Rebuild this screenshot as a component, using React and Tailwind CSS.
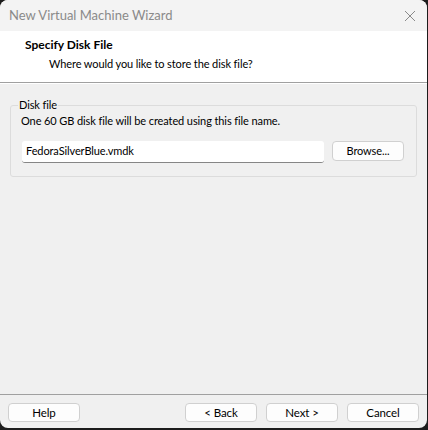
export default function App() {
  const font = { fontFamily: 'Lato, "Noto Sans", sans-serif' };
  return (
    <div className="w-[428px] h-[430px] bg-[#1c1c1c]" style={font}>
      <div className="w-[427px] h-[428px] rounded-[8px] bg-[#f0f0f0] overflow-hidden flex flex-col text-[11px] tracking-[-0.1px] text-black">
        <div className="h-[31px] shrink-0 flex items-center justify-between bg-[#f3f3f3] pl-[9px] pr-[10px]">
          <span className="text-[13px] tracking-normal text-[#8a8a8a]">New Virtual Machine Wizard</span>
          <svg width="12" height="12" viewBox="0 0 12 12" className="mr-[1px]">
            <path d="M1 1L11 11M11 1L1 11" stroke="#8a8a8a" strokeWidth="1" />
          </svg>
        </div>
        <div className="h-[52px] shrink-0 bg-white border-b border-[#a0a0a0] pt-[5px]">
          <div className="pl-[25px] font-bold text-[12px] tracking-normal leading-[18px]">Specify Disk File</div>
          <div className="pl-[49px] leading-[18px] mt-[1px] text-[11px]">Where would you like to store the disk file?</div>
        </div>
        <div className="h-px bg-white shrink-0" />
        <div className="flex-1 flex flex-col px-[10px] pt-[14px]">
          <fieldset className="border border-[#dcdcdc] rounded-[3px] px-[10px] pb-[10px] h-[79px]">
            <legend className="px-[1px] ml-[-3px] leading-[14px]">Disk file</legend>
            <div className="leading-[16px] mt-[1px]">One 60 GB disk file will be created using this file name.</div>
            <div className="flex items-start mt-[12px]">
              <div className="w-[302px] h-[22px] bg-white border-b border-[#868686] rounded-[3px] flex items-center px-[4px] ml-[1px]">FedoraSilverBlue.vmdk</div>
              <button className="ml-[8px] w-[72px] h-[20px] bg-[#fdfdfd] border border-[#d0d0d0] rounded-[4px] flex items-center justify-center">Browse...</button>
            </div>
          </fieldset>
        </div>
        <div className="h-px bg-[#a0a0a0] shrink-0" />
        <div className="h-[33px] shrink-0 flex items-start pt-[8px] px-[8px]">
          <Btn>Help</Btn>
          <div className="flex-1" />
          <Btn>&lt; Back</Btn>
          <div className="w-[9px]" />
          <Btn>Next &gt;</Btn>
          <div className="w-[9px]" />
          <Btn>Cancel</Btn>
        </div>
      </div>
    </div>
  );
}

function Btn({ children }) {
  return (
    <button className="w-[72px] h-[19px] bg-[#fdfdfd] border border-[#d0d0d0] rounded-[4px] flex items-center justify-center text-[11.5px] leading-none">
      {children}
    </button>
  );
}
